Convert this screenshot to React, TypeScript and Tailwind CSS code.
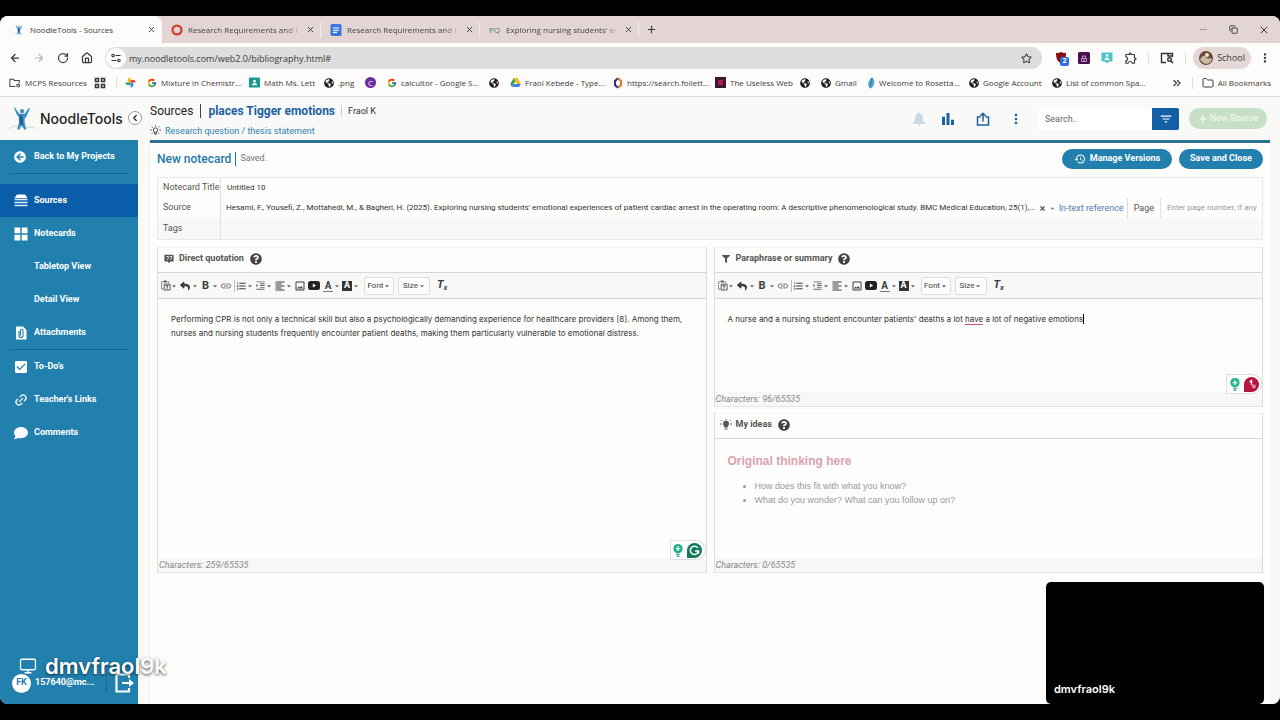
import React from "react";
import {
  ArrowLeft, ArrowRight, RotateCw, House, Star, X, Plus, Minus, Copy, Folder, ChevronsRight, Link2, Monitor, ChevronLeft,
} from "lucide-react";
import { FcGoogle } from "react-icons/fc";
import { FaGlobeAmericas, FaArrowCircleLeft, FaComment, FaQuestionCircle, FaReply, FaFilter, FaCaretDown } from "react-icons/fa";
import {
  MdBarChart, MdMoreVert, MdFilterList, MdHistory, MdCheckBox, MdLink, MdFormatAlignLeft, MdOutlineExtension,
  MdOutlineImage, MdFormatListNumbered, MdFormatIndentIncrease,
} from "react-icons/md";

const UI = "font-['Open_Sans','Noto_Sans',sans-serif]";

function Person({ className }: { className: string }) {
  return (
    <svg viewBox="0 0 32 28" className={className} aria-hidden="true">
      <path d="M1 26c5-6 11-4 15-2 5 2 10-3 15 1" fill="none" stroke="#c9d3d8" strokeWidth="1" />
      <path d="M8 1l5 7 6 0 5-7 1 1-4 9-2 3 0 4 2 8h-2.500l-3-7-2 7H10.500l2-8 0-6-3-4-3-8z" fill="#3a93c4" />
      <path d="M14 8l3 5 0 11-3-5-1-5z" fill="#1d5f8c" />
      <circle cx="16" cy="5" r="2.4" fill="#3a93c4" />
    </svg>
  );
}

function Docs() {
  return (
    <svg viewBox="0 0 12 12" className="size-3">
      <rect x="0.500" width="11" height="12" rx="1.500" fill="#3b78e0" />
      <path d="M3 4h6M3 6.200h6M3 8.400h4" stroke="#fff" strokeWidth="1.100" />
    </svg>
  );
}

function Pinwheel() {
  return (
    <svg viewBox="0 0 12 12" className="size-[11px]">
      <path d="M6 6V0.500A3 3 0 0 0 3 3.500 3 3 0 0 0 3.600 6z" fill="#f6b704" />
      <path d="M6 6h5.500A3 3 0 0 0 8.500 3 3 3 0 0 0 6 3.800z" fill="#e54335" />
      <path d="M6 6v5.500A3 3 0 0 0 9 8.500 3 3 0 0 0 8.400 6z" fill="#4280ef" />
      <path d="M6 6H0.500A3 3 0 0 0 3.500 9 3 3 0 0 0 6 8.200z" fill="#34a353" />
    </svg>
  );
}

function Drive() {
  return (
    <svg viewBox="0 0 12 11" className="size-[11px]">
      <path d="M4 0.500L0.300 7l1.900 3.300L6 3.800z" fill="#34a353" />
      <path d="M4 0.500h4L11.800 7H8z" fill="#f6b704" />
      <path d="M2.200 10.300h7.600L11.800 7H4.200z" fill="#4280ef" />
    </svg>
  );
}

function ManagedFolder() {
  return (
    <svg viewBox="0 0 14 12" className="size-3" fill="none" stroke="#444" strokeWidth="1.2">
      <path d="M7.500 10H1V1.500h4l1.200 1.500H12V6" />
      <circle cx="10.800" cy="9" r="1.700" />
    </svg>
  );
}

function Apps() {
  return (
    <svg viewBox="0 0 12 12" className="size-3" fill="none" stroke="#333" strokeWidth="1.500">
      <path d="M1.500 1.500h3v3h-3zM7.500 1.500h3v3h-3zM1.500 7.500h3v3h-3zM7.500 7.500h3v3h-3z" />
    </svg>
  );
}

function Classroom() {
  return (
    <svg viewBox="0 0 12 12" className="size-[11px]">
      <rect y="0.500" width="12" height="11" rx="1" fill="#159a8c" />
      <circle cx="6" cy="4.500" r="1.400" fill="#fff" />
      <path d="M3.200 9c0-3.200 5.600-3.200 5.600 0z" fill="#fff" />
    </svg>
  );
}

function LetterC() {
  return <span className="flex size-[11px] items-center justify-center rounded-full bg-[#6a2c9c] text-[8px] text-white">C</span>;
}

function Follett() {
  return (
    <svg viewBox="0 0 10 12" className="h-3 w-[10px]" fill="none" strokeWidth="2">
      <path d="M5 1.200L2 4v4l3 2.800" stroke="#2d2c86" />
      <path d="M5 1.200L8 4v4l-3 2.800" stroke="#e0782c" />
    </svg>
  );
}

function Useless() {
  return (
    <svg viewBox="0 0 11 11" className="size-[11px]">
      <rect width="11" height="11" fill="#3a1a30" />
      <rect x="3" y="3" width="5" height="5" fill="#b3194b" />
    </svg>
  );
}

function Rosetta() {
  return (
    <svg viewBox="0 0 8 12" className="h-3 w-2">
      <path d="M5 0.500C8 3 8.500 8 4 11.500 0 10.500 0 3.500 5 0.500z" fill="#58a5cf" />
      <path d="M2.500 10.500C4 8 5 5 5 1" stroke="#2b6f9d" fill="none" />
    </svg>
  );
}

const globe = <FaGlobeAmericas className="size-[10px] text-[#222]" />;

const bookmarks: { icon: React.ReactNode; label: string; w: string }[] = [
  { icon: <Pinwheel />, label: "", w: "w-[22px]" },
  { icon: <FcGoogle className="size-[10px]" />, label: "Mixture in Chemistr...", w: "w-[102px]" },
  { icon: <Classroom />, label: "Math Ms. Lett", w: "w-[75px]" },
  { icon: globe, label: ".png", w: "w-[41px]" },
  { icon: <LetterC />, label: "", w: "w-[22px]" },
  { icon: <FcGoogle className="size-[10px]" />, label: "calcultor - Google S...", w: "w-[102px]" },
  { icon: globe, label: "", w: "w-[21px]" },
  { icon: <Drive />, label: "Fraol Kebede - Type...", w: "w-[103px]" },
  { icon: <Follett />, label: "https://search.follett...", w: "w-[102px]" },
  { icon: <Useless />, label: "The Useless Web", w: "w-[85px]" },
  { icon: globe, label: "", w: "w-[21px]" },
  { icon: globe, label: "Gmail", w: "w-[46px]" },
  { icon: <Rosetta />, label: "Welcome to Rosetta...", w: "w-[102px]" },
  { icon: globe, label: "Google Account", w: "w-[83px]" },
  { icon: globe, label: "List of common Spa...", w: "w-[100px]" },
];

function BrowserTab({ icon, title, active }: { icon: React.ReactNode; title: string; active?: boolean }) {
  return (
    <div className={active ? "flex h-full w-[162px] items-center rounded-t-lg bg-[#fdfcfb] pr-[6px] pl-[13px]" : "flex h-4 w-[159px] items-center border-r border-[#f3eae9] pr-[5px] pl-[9px]"}>
      <span className="flex w-[17px] shrink-0 items-center">{icon}</span>
      <span className={active ? "min-w-0 flex-1 whitespace-nowrap" : "min-w-0 flex-1 bg-linear-to-r from-[#3b3b3b] from-88% to-[#c8bcbb] to-100% bg-clip-text whitespace-nowrap text-transparent"}>{title}</span>
      <button aria-label={`Close ${title}`} className="ml-2"><X className="size-[9px]" strokeWidth={2.5} /></button>
    </div>
  );
}

function BrowserChrome() {
  return (
    <header className={`${UI} text-[8px] text-[#3b3b3b]`}>
      <div className="flex h-[27px] items-center bg-[#e3d5d4]">
        <BrowserTab active icon={<Person className="h-3 w-3" />} title="NoodleTools - Sources" />
        <BrowserTab icon={<svg viewBox="0 0 12 12" className="size-3" fill="none" stroke="#d03a2c"><circle cx="6" cy="6" r="4.600" strokeWidth="2" /><circle cx="6" cy="6" r="3.600" strokeWidth="1" strokeDasharray="1.400 1.400" /></svg>} title="Research Requirements and Re" />
        <BrowserTab icon={<Docs />} title="Research Requirements and Re" />
        <BrowserTab icon={<span className="text-[#4e7d6c]">PQ</span>} title="Exploring nursing students' em" />
        <button aria-label="New tab" className="ml-[7px]"><Plus className="size-[11px]" strokeWidth={2.5} /></button>
        <div className="ml-auto flex items-center gap-5 pr-[10px]">
          <button aria-label="Minimize"><Minus className="size-[11px] text-[#999]" /></button>
          <button aria-label="Restore"><Copy className="size-[9px] -scale-x-100 -rotate-90" strokeWidth={2.5} /></button>
          <button aria-label="Close window"><X className="size-3" /></button>
        </div>
      </div>
      <div className="flex h-[30px] items-center bg-[#fdfcfb] pr-2 pl-[9px]">
        <div className="flex w-[96px] items-center gap-3">
          <button aria-label="Back"><ArrowLeft className="size-3" strokeWidth={2.5} /></button>
          <button aria-label="Forward"><ArrowRight className="size-3 text-[#bbb]" strokeWidth={2.5} /></button>
          <button aria-label="Reload"><RotateCw className="size-3" strokeWidth={2.5} /></button>
          <button aria-label="Home"><House className="size-3" strokeWidth={2.5} /></button>
        </div>
        <div className="flex h-[22px] min-w-0 flex-1 items-center rounded-full bg-[#dddddb] pr-[10px] pl-px">
          <button aria-label="Site information" className="flex size-5 items-center justify-center rounded-full bg-white">
            <svg viewBox="0 0 12 12" className="size-[10px]" fill="none" stroke="#333" strokeWidth="1.300">
              <circle cx="2.500" cy="3" r="1.500" /><path d="M5.500 3h6M0.500 9h6" /><circle cx="9.500" cy="9" r="1.500" />
            </svg>
          </button>
          <input aria-label="Address" defaultValue="my.noodletools.com/web2.0/bibliography.html#" className="ml-[3px] h-5 min-w-0 flex-1 bg-transparent text-[9px] outline-none" />
          <button aria-label="Bookmark this tab"><Star className="size-[11px]" strokeWidth={2.2} /></button>
        </div>
        <div className="flex items-center gap-[11px] pl-[13px]">
          <button aria-label="uBlock" className="relative">
            <svg viewBox="0 0 12 12" className="size-3"><path d="M1 1c3 0 4-.5 5-1 1 .5 2 1 5 1 0 5-1 8-5 10.500C2 9 1 6 1 1z" fill="#8b0d12" /></svg>
            <span className="absolute top-[5px] left-[5px] flex h-[9px] w-[9px] items-center justify-center rounded-[2px] bg-[#2d6fdb] text-[7px] font-bold text-white">2</span>
          </button>
          <button aria-label="Password extension">
            <svg viewBox="0 0 12 12" className="size-3"><rect width="12" height="12" rx="1.500" fill="#46124c" /><path d="M3.500 9.500V6.500h5v3zM4.500 6.500V4h3v2.500M5 8h2" fill="none" stroke="#c88bd0" /></svg>
          </button>
          <button aria-label="Classroom extension">
            <svg viewBox="0 0 12 12" className="size-3"><path d="M0.500 0.500h11v9H8L6 11.500 4 9.500H0.500z" fill="#4fc4c8" /><circle cx="6" cy="3.500" r="1.300" fill="#fff" /><path d="M3.500 8c0-3.500 5-3.500 5 0z" fill="#fff" /></svg>
          </button>
          <button aria-label="Extensions"><MdOutlineExtension className="size-[14px]" /></button>
          <span className="-ml-px h-3 w-px bg-[#ddd]" />
          <button aria-label="Search tabs">
            <svg viewBox="0 0 14 12" className="h-3 w-[14px]" fill="none" stroke="#333" strokeWidth="1.400"><path d="M6 10.500H1.500v-9h11V5M8 1.500V4h4.500" /><circle cx="9.500" cy="7.500" r="1.800" /><path d="M11 9l2 2.200" /></svg>
          </button>
          <span className="h-3 w-px bg-[#ddd]" />
          <button className="-ml-1 flex h-[22px] items-center gap-1 rounded-full bg-[#e3d8d7] px-[6px] text-[9px]">
            <svg viewBox="0 0 14 14" className="size-[14px]"><circle cx="7" cy="7" r="7" fill="#6b4a35" /><path d="M1 8c2 6 10 7 12 0-2-2-4 1-6-2S3 6 1 8z" fill="#c9b8a2" /><circle cx="8" cy="4" r="2" fill="#efe6da" /></svg>
            School
          </button>
          <button aria-label="Browser menu" className="-ml-1"><MdMoreVert className="size-[14px]" /></button>
        </div>
      </div>
      <nav aria-label="Bookmarks" className="flex h-6 items-center overflow-hidden border-b border-[#dcdcda] bg-[#fdfcfb] pb-1 pl-[9px] whitespace-nowrap">
        <a href="#mcps" className="flex w-[85px] shrink-0 items-center gap-1"><ManagedFolder />MCPS Resources</a>
        <a href="#apps" aria-label="Apps" className="flex w-[22px] shrink-0"><Apps /></a>
        <span className="mr-2 h-3 w-px bg-[#e0dcda]" />
        {bookmarks.map((b, i) => (
          <a key={i} href="#bookmark" aria-label={b.label || "Bookmark"} className={`flex shrink-0 items-center gap-1 ${b.w}`}>
            <span className="shrink-0">{b.icon}</span>{b.label}
          </a>
        ))}
        <button aria-label="More bookmarks" className="ml-auto"><ChevronsRight className="size-3" strokeWidth={2.500} /></button>
        <span className="mx-[9px] h-3 w-px bg-[#ddd]" />
        <a href="#all" className="flex items-center gap-1 pr-[9px]"><Folder className="size-3" />All Bookmarks</a>
      </nav>
    </header>
  );
}

function StackIcon() {
  return (
    <svg viewBox="0 0 14 13" className="h-[13px] w-[14px]"><path d="M3 0.500h8l2.500 3.500h-13z" fill="#fff" /><path d="M0.500 5.500h13M0.500 8.500h13M0.500 11.500h13" stroke="#d9f1fb" strokeWidth="1.700" /></svg>
  );
}

function CardsIcon() {
  return <svg viewBox="0 0 14 14" className="size-[14px]" fill="#fff"><path d="M0.500 0.500h5.800v5.800H0.500zM7.700 0.500h5.800v5.800H7.700zM0.500 7.700h5.800v5.800H0.500zM7.700 7.700h5.800v5.800H7.700z" /></svg>;
}

function AttachIcon() {
  return (
    <svg viewBox="0 0 12 14" className="h-[14px] w-[14px]"><path d="M1 0.500h7l3.500 3.500v9.500H1z" fill="#fff" /><path d="M4 5v4.500a2 2 0 0 0 4 0V4.500a1.300 1.300 0 0 0-2.600 0v5" fill="none" stroke="#2180ae" strokeWidth="1.100" /></svg>
  );
}

function NavItem({ icon, label, active }: { icon?: React.ReactNode; label: string; active?: boolean }) {
  return (
    <a href="#nav" className={active ? "flex h-[33px] items-center bg-[#0a5ea9] pl-[14px]" : "flex h-[33px] items-center pl-[14px]"}>
      <span className="flex w-[20px] shrink-0 items-center">{icon}</span>{label}
    </a>
  );
}

function Sidebar() {
  return (
    <aside className="flex w-[138px] shrink-0 flex-col bg-[#2180ae]">
      <div className="relative flex h-[43px] items-center gap-1 bg-[#f9f9f8] pl-2 font-['Inter',sans-serif] text-[14px] font-medium text-[#222]">
        <Person className="h-7 w-7" />
        <span>NoodleTools</span>
        <button aria-label="Collapse sidebar" className="absolute top-[14px] -right-1 z-10 flex size-[14px] items-center justify-center rounded-full border border-[#999] bg-white"><ChevronLeft className="size-[10px]" strokeWidth={3} /></button>
      </div>
      <nav aria-label="Project" className="flex flex-1 flex-col text-[9px] font-bold text-white">
        <NavItem icon={<FaArrowCircleLeft className="size-3" />} label="Back to My Projects" />
        <hr className="mx-[10px] mb-[10px] border-[#1a6795]" />
        <NavItem active icon={<StackIcon />} label="Sources" />
        <NavItem icon={<CardsIcon />} label="Notecards" />
        <NavItem label="Tabletop View" />
        <NavItem label="Detail View" />
        <NavItem icon={<AttachIcon />} label="Attachments" />
        <hr className="mx-[10px] border-[#1a6795]" />
        <NavItem icon={<MdCheckBox className="-ml-px size-4" />} label="To-Do's" />
        <NavItem icon={<Link2 className="size-[14px] -rotate-45" strokeWidth={2.200} />} label="Teacher's Links" />
        <NavItem icon={<FaComment className="size-[14px]" />} label="Comments" />
        <div className="mt-auto flex h-[42px] items-center pr-[3px] pl-3">
          <span className="flex size-[19px] items-center justify-center rounded-full bg-white text-[#2180ae]">FK</span>
          <span className="ml-1">157640@mc...</span>
          <span className="ml-auto h-5 w-px bg-[#1a6795]" />
          <button aria-label="Log out" className="ml-2">
            <svg viewBox="0 0 20 20" className="size-5" fill="none" stroke="#fff" strokeWidth="2.200"><path d="M14 5V1.500H1.500v17H14V15" /><path d="M7 10h8" /><path d="M14 6l5 4-5 4z" fill="#fff" stroke="none" /></svg>
          </button>
        </div>
      </nav>
    </aside>
  );
}

function AppHeader() {
  return (
    <div className="flex h-[43px] items-center bg-[#f9f9f8] pr-[13px]">
      <div className="flex flex-col gap-[6px] pt-[2px]">
        <div className="flex items-center text-[12px] leading-4">
          <span className="text-[#222]">Sources</span>
          <span className="mx-[7px] h-[14px] w-px bg-[#444]" />
          <h1 className="font-bold text-[#1c62a0]">places Tigger emotions</h1>
          <span className="mx-[6px] h-3 w-px bg-[#ccc]" />
          <span className="text-[9px] text-[#333]">Fraol K</span>
        </div>
        <a href="#thesis" className="flex items-center gap-1 text-[9px] leading-3 text-[#2e7fb0]">
          <svg viewBox="0 0 12 12" className="size-[11px]" fill="none" stroke="#444"><circle cx="6" cy="5.500" r="2.400" /><path d="M5 8v2h2V8M6 0v1.500M0 5.500h1.800M10.200 5.500H12M1.800 1.500l1.200 1.200M10.200 1.500L9 2.700M2 9.500l1.200-1.200M10 9.500L8.800 8.300" /></svg>
          Research question / thesis statement
        </a>
      </div>
      <div className="ml-auto flex items-center text-[#1b62a0]">
        <button aria-label="Notifications" className="flex w-[29px] justify-center">
          <svg viewBox="0 0 14 14" className="size-[14px]" fill="#c8d9e6"><path d="M7 0.500a1 1 0 0 1 1 1c2 .5 3 2 3 4.500v3l2 2v1H1v-1l2-2V6c0-2.500 1-4 3-4.500a1 1 0 0 1 1-1zM5.500 12.500h3a1.500 1.200 0 0 1-3 0z" /></svg>
        </button>
        <button aria-label="Statistics" className="flex w-[30px] justify-center"><MdBarChart className="size-[18px]" /></button>
        <button aria-label="Share" className="flex w-10 justify-center">
          <svg viewBox="0 0 14 14" className="size-[14px]" fill="none" stroke="currentColor" strokeWidth="1.500"><path d="M4.500 5H1.500v8h11V5H9.500M7 9.500V1.500M4.200 4L7 1.200 9.800 4" /></svg>
        </button>
        <button aria-label="More" className="flex w-[26px] justify-center"><MdMoreVert className="size-4" /></button>
        <input aria-label="Search" placeholder="Search.." className="ml-[10px] h-[22px] w-[113px] bg-white px-[6px] text-[9px] outline-none placeholder:text-[#666]" />
        <button aria-label="Filter" className="flex h-[22px] w-[27px] items-center justify-center rounded-r-[2px] bg-[#135fa5] text-white"><MdFilterList className="size-[14px]" /></button>
        <button className="ml-[10px] flex h-[21px] w-[78px] items-center justify-center gap-[2px] rounded-full bg-[#c8dfc7] text-[9px] font-medium text-[#eef7ed]"><Plus className="size-[10px]" strokeWidth={4} />New Source</button>
      </div>
    </div>
  );
}

function Caret() {
  return <FaCaretDown className="size-[6px] shrink-0 text-[#666]" />;
}

function Tool({ label, w, caret, children }: { label: string; w: string; caret?: boolean; children: React.ReactNode }) {
  return (
    <button aria-label={label} className={`flex h-4 shrink-0 items-center justify-between ${w}`}>{children}{caret && <Caret />}</button>
  );
}

function EditorToolbar() {
  return (
    <div role="toolbar" aria-label="Formatting" className="flex h-[27px] items-center border-y border-[#d6d6d6] bg-[#f8f8f7] pl-[3px] text-[#3c3c3c]">
      <Tool label="Paste" w="w-4" caret>
        <svg viewBox="0 0 11 11" className="size-[11px]" fill="none" stroke="#444"><path d="M2.500 9.500h-2v-8h8v1.500" strokeDasharray="1.500 1" /><path d="M3 1h3" strokeWidth="1.800" /><path d="M3.500 4h6.500v6.500H3.500zM5 5.700h3.500M6.750 5.700v3.500" /></svg>
      </Tool>
      <Tool label="Undo" w="w-[18px] ml-[3px]" caret><FaReply className="size-[10px]" /></Tool>
      <Tool label="Bold" w="w-4 ml-1" caret><b className="text-[11px] leading-4">B</b></Tool>
      <Tool label="Link" w="w-3 ml-[2px]"><MdLink className="size-3 text-[#777]" /></Tool>
      <span className="ml-[2px] h-3 w-px bg-[#bbb]" />
      <Tool label="List" w="w-[17px] ml-px" caret><MdFormatListNumbered className="size-3" /></Tool>
      <Tool label="Indent" w="w-[17px] ml-[2px]" caret><MdFormatIndentIncrease className="size-[11px] text-[#666]" /></Tool>
      <Tool label="Align" w="w-[18px] ml-[2px]" caret><MdFormatAlignLeft className="size-3" /></Tool>
      <Tool label="Image" w="w-3 ml-[2px]"><MdOutlineImage className="size-3" /></Tool>
      <Tool label="Video" w="w-[14px] ml-[2px]"><svg viewBox="0 0 12 9" className="h-[9px] w-3"><rect width="12" height="9" rx="2.500" fill="#222" /><path d="M4.800 2.500v4l3.300-2z" fill="#fff" /></svg></Tool>
      <Tool label="Text color" w="w-[17px] ml-px" caret><b className="w-[10px] border-b border-[#777] text-center text-[10px] leading-[11px]">A</b></Tool>
      <Tool label="Highlight" w="w-[17px] ml-[2px]" caret><b className="flex size-[10px] items-center justify-center bg-[#333] text-[9px] text-white">A</b></Tool>
      <button className="ml-[5px] flex h-[18px] w-[30px] shrink-0 items-center justify-center gap-px rounded-[2px] border border-[#ddd] bg-[#fdfdfc] text-[8px]">Font<Caret /></button>
      <button className="ml-1 flex h-[18px] w-8 shrink-0 items-center justify-center gap-px rounded-[2px] border border-[#ddd] bg-[#fdfdfc] text-[8px]">Size<Caret /></button>
      <button aria-label="Clear formatting" className="ml-[7px] text-[11px] font-bold italic">T<sub className="text-[7px]">x</sub></button>
    </div>
  );
}

function PanelHeader({ icon, title }: { icon: React.ReactNode; title: string }) {
  return (
    <div className="flex h-[25px] items-center border-t border-[#f1f1f0] pb-[2px] pl-[5px] text-[#555]">
      <span className="flex w-3 shrink-0 items-center justify-center">{icon}</span>
      <h3 className="ml-1 text-[9px] font-bold">{title}</h3>
      <button aria-label={`Help: ${title}`} className="ml-[6px]"><FaQuestionCircle className="size-3 text-[#444]" /></button>
    </div>
  );
}

function GrammarBadge({ alert }: { alert?: boolean }) {
  return (
    <div className="absolute right-0 -bottom-[2px] flex h-5 w-9 items-center justify-center gap-1 rounded-l-[4px] rounded-r-full border border-[#ddd] bg-white">
      <svg viewBox="0 0 10 14" className="h-[13px] w-[10px]"><circle cx="5" cy="5" r="5" fill="#1fb487" /><path d="M5 2.500v5M2.500 5h5" stroke="#fff" strokeWidth="1.400" /><path d="M3 11h4M3.500 13h3" stroke="#159a70" strokeWidth="1.200" /></svg>
      {alert ? (
        <svg viewBox="0 0 16 16" className="size-[15px]"><path d="M0 8a8 8 0 1 1 8 8H0z" fill="#b8123f" /><path d="M6 5.500L8 4v4.500" stroke="#fff" strokeWidth="1.500" fill="none" /><circle cx="10.500" cy="10" r="2.300" fill="#d98aa0" /></svg>
      ) : (
        <svg viewBox="0 0 16 16" className="size-[15px]"><path d="M0 8a8 8 0 1 1 8 8H0z" fill="#15795c" /><path d="M11.500 5.200A4.400 4.400 0 1 0 12.300 8.500H8.500M12.300 8.500v3" fill="none" stroke="#fff" strokeWidth="1.600" /></svg>
      )}
    </div>
  );
}

function Count({ n }: { n: number }) {
  return <div className="h-[15px] border-b border-[#e4e4e3] bg-[#f7f7f6] pl-px text-[9px] leading-[14px] text-[#888] italic">Characters: {n}/65535</div>;
}

function NotecardEditor() {
  return (
    <main className="flex-1 border-t-[3px] border-[#2a7299] bg-[#fdfdfc] px-[7px] pb-4">
      <div className="flex h-8 items-center">
        <h2 className="text-[12px] font-medium text-[#2278ab]">New notecard</h2>
        <span className="mx-1 h-[14px] w-px bg-[#2278ab]" />
        <span className="text-[9px] text-[#777]">Saved.</span>
        <div className="ml-auto flex gap-[7px] text-[9px] font-bold text-white">
          <button className="flex h-5 w-[110px] items-center justify-center gap-1 rounded-full bg-[#2180ae]"><MdHistory className="size-3" />Manage Versions</button>
          <button className="h-5 w-[84px] rounded-full bg-[#2180ae]">Save and Close</button>
        </div>
      </div>
      <div className="mt-[2px] grid grid-cols-[63px_minmax(0,1fr)] border border-[#e8e8e7] text-[9px] text-[#555]">
        <label htmlFor="title" className="flex h-5 items-center border-r border-[#e0e0df] pl-[5px]">Notecard Title</label>
        <input id="title" defaultValue="Untitled 10" className="bg-transparent px-[6px] text-[8px] text-[#333] outline-none" />
        <label htmlFor="source" className="flex h-5 items-center border-r border-[#e0e0df] pl-[5px]">Source</label>
        <div className="flex min-w-0 items-center pr-[3px] pl-[5px]">
          <input id="source" readOnly defaultValue="Hesami, F., Yousefi, Z., Mottahedi, M., & Bagheri, H. (2025). Exploring nursing students' emotional experiences of patient cardiac arrest in the operating room: A descriptive phenomenological study. BMC Medical Education, 25(1),..." className="min-w-0 flex-1 overflow-hidden bg-transparent text-[8px] text-ellipsis text-[#333] outline-none" />
          <button aria-label="Clear source"><X className="size-[7px]" strokeWidth={4} /></button>
          <button aria-label="Choose source" className="mx-[3px]"><FaCaretDown className="size-[7px] text-[#888]" /></button>
          <a href="#reference" className="border-r border-[#ddd] pr-[3px] leading-5 text-[#4d80b3]">In-text reference</a>
          <label htmlFor="page" className="border-r border-[#e4e4e4] px-[6px] leading-5">Page</label>
          <input id="page" placeholder="Enter page number, if any" className="ml-[6px] w-[92px] bg-transparent text-[8px] outline-none placeholder:text-[#999]" />
        </div>
        <label htmlFor="tags" className="flex h-[21px] items-center border-r border-[#e0e0df] bg-[#f8f8f7] pl-[5px]">Tags</label>
        <input id="tags" className="bg-[#f8f8f7] px-[6px] outline-none" />
      </div>
      <div className="mt-[7px] grid grid-cols-2 gap-[7px] text-[#333]">
        <section className="flex flex-col border-x border-[#dcdcdb]">
          <PanelHeader title="Direct quotation" icon={<svg viewBox="0 0 12 12" className="size-[10px]"><path d="M0.500 1h11v8H7.500L6 11 4.500 9h-4z" fill="#555" /><path d="M3 3h2.200v2L4 7M6.800 3H9v2L7.800 7" fill="none" stroke="#fff" /></svg>} />
          <EditorToolbar />
          <div className="relative flex-1">
            <div role="textbox" aria-label="Direct quotation" contentEditable suppressContentEditableWarning className="py-[13px] pr-1 pl-[13px] font-['Inter',sans-serif] text-[8px] leading-[14px] outline-none">
              Performing CPR is not only a technical skill but also a psychologically demanding experience for healthcare providers [8]. Among them, nurses and nursing students frequently encounter patient deaths, making them particularly vulnerable to emotional distress.
            </div>
            <GrammarBadge />
          </div>
          <Count n={259} />
        </section>
        <div className="flex flex-col gap-[6px]">
          <section className="border-x border-[#dcdcdb]">
            <PanelHeader title="Paraphrase or summary" icon={<FaFilter className="size-[8px]" />} />
            <EditorToolbar />
            <div className="relative">
              <div role="textbox" aria-label="Paraphrase or summary" contentEditable suppressContentEditableWarning className="min-h-[93px] p-[13px] font-['Inter',sans-serif] text-[8px] leading-[14px] outline-none">
                A nurse and a nursing student encounter patients' deaths a lot <span className="border-b border-[#d0506a]">have</span> a lot of negative emotions<span className="border-r border-black" />
              </div>
              <GrammarBadge alert />
            </div>
            <Count n={96} />
          </section>
          <section className="border-x border-[#dcdcdb]">
            <PanelHeader title="My ideas" icon={<svg viewBox="0 0 12 12" className="size-3" stroke="#555"><path d="M3.500 4.500a2.500 2.500 0 0 1 5 0c0 1.500-1 2-1 3.500h-3c0-1.500-1-2-1-3.500z" fill="#555" /><path d="M4.500 10h3M6 0v1M0 5h1.800M10.200 5H12M1.500 1.200l1 1M10.500 1.200l-1 1" /></svg>} />
            <div role="textbox" aria-label="My ideas" className="min-h-[120px] border-t border-[#d6d6d6] px-[13px] pt-[15px]">
              <p className="font-['Liberation_Sans',sans-serif] text-[12px] leading-[14px] font-bold text-[#d9a3b0]">Original thinking here</p>
              <ul className="mt-[11px] list-disc pl-[27px] font-['Liberation_Sans',sans-serif] text-[9px] leading-[14px] text-[#999]">
                <li>How does this fit with what you know?</li>
                <li>What do you wonder? What can you follow up on?</li>
              </ul>
            </div>
            <Count n={0} />
          </section>
        </div>
      </div>
    </main>
  );
}

export default function App() {
  return (
    <div className="relative flex min-h-screen flex-col bg-black py-4 font-['Roboto',sans-serif]">
      <div className="flex flex-1 flex-col overflow-hidden rounded-lg bg-[#fdfdfc]">
        <BrowserChrome />
        <div className="flex flex-1">
          <Sidebar />
          <div className="w-3 shrink-0 border-r border-[#f3f3f2] bg-[#f9f9f8]" />
          <div className="flex min-w-0 flex-1 flex-col">
            <AppHeader />
            <div className="flex flex-1">
              <NotecardEditor />
              <div className="w-[10px] bg-[#f8f8f7]" />
            </div>
          </div>
        </div>
      </div>
      <div className="absolute bottom-[40px] left-[19px] flex items-center gap-2 font-['Inter',sans-serif] text-[22px] leading-7 font-semibold text-white text-shadow-[0_1px_3px_rgb(0_0_0/0.7)]">
        <Monitor className="size-[18px]" strokeWidth={1.700} />dmvfraol9k
      </div>
      <div className="absolute right-4 bottom-4 flex h-[122px] w-[218px] items-end rounded-[5px] bg-black px-2 pb-[7px] font-['Inter',sans-serif] text-[11px] font-semibold text-white">dmvfraol9k</div>
    </div>
  );
}
